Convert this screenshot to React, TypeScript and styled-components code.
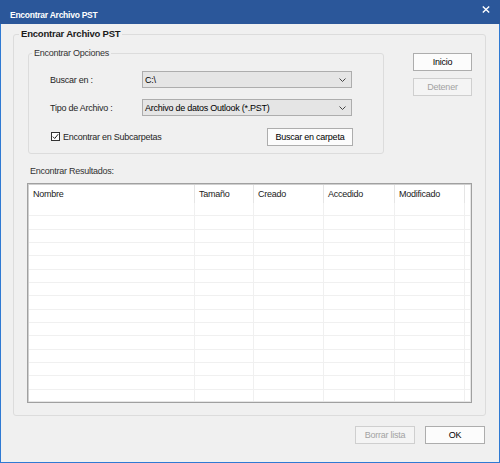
import React from "react";
import styled, { createGlobalStyle } from "styled-components";

const Global = createGlobalStyle`
  html, body { margin: 0; padding: 0; background: #f0f0f0; }
  body { font-family: "Liberation Sans", Arial, sans-serif; }
`;

const Window = styled.div`
  width: 500px;
  height: 463px;
  box-sizing: border-box;
  border: 1px solid #2f7ad3;
  border-top: none;
  background: #f0f0f0;
  display: flex;
  flex-direction: column;
  font-family: "Liberation Sans", Arial, sans-serif;
  font-size: 9px;
  letter-spacing: -0.25px;
  color: #1a1a1a;
`;

const TitleBar = styled.div`
  height: 24px;
  margin: 0 -1px;
  background: #2b579a;
  color: #fff;
  display: flex;
  justify-content: space-between;
  align-items: center;
  padding: 0 10px 0 10px;
  flex-shrink: 0;
`;

const TitleText = styled.span`
  font-weight: bold;
  font-size: 8.5px;
  line-height: 14px;
  margin-top: 6px;
`;

const CloseIcon = styled.svg`
  width: 8px;
  height: 7px;
  align-self: flex-start;
  margin-top: 6px;
`;

const Body = styled.div`
  flex: 1;
  display: flex;
  flex-direction: column;
  padding: 10px 13px 0 12px;
`;

const Group = styled.div<{ $w?: number; $h?: number }>`
  position: relative;
  box-sizing: border-box;
  border: 1px solid #dcdcdc;
  border-radius: 3px;
  ${(p) => (p.$w ? `width: ${p.$w}px;` : "")}
  ${(p) => (p.$h ? `height: ${p.$h}px;` : "")}
`;

const GroupTitle = styled.span<{ $bold?: boolean; $left: number }>`
  position: absolute;
  top: -8px;
  left: ${(p) => p.$left}px;
  padding: 0 2px;
  background: #f0f0f0;
  line-height: 14px;
  font-weight: ${(p) => (p.$bold ? "bold" : "normal")};
  font-size: ${(p) => (p.$bold ? "9.5px" : "9px")};
  letter-spacing: ${(p) => (p.$bold ? "-0.2px" : "-0.25px")};
  color: ${(p) => (p.$bold ? "#1a1a1a" : "#333")};
`;

const OuterContent = styled.div`
  display: flex;
  flex-direction: column;
  padding: 18px 12px 12px 13px;
`;

const TopRow = styled.div`
  display: flex;
  align-items: flex-start;
  gap: 29px;
  margin-left: 1px;
`;

const OptionsContent = styled.div`
  display: grid;
  grid-template-columns: 92px 210px;
  grid-template-rows: 17px 17px 18px;
  row-gap: 11px;
  padding: 17px 0 7px 21px;
  align-items: center;
`;

const FieldLabel = styled.span`
  line-height: 14px;
  color: #262626;
`;

const Combo = styled.div`
  height: 17px;
  box-sizing: border-box;
  background: #e5e5e5;
  border: 1px solid #adadad;
  display: flex;
  align-items: center;
  justify-content: space-between;
  padding: 0 5px 0 2px;
  color: #000;
`;

const Chevron = styled.svg`
  width: 7px;
  height: 4px;
`;

const CheckRow = styled.div`
  grid-column: 1 / span 2;
  display: flex;
  align-items: center;
  justify-content: space-between;
  margin-top: 1px;
  margin-right: -1px;
`;

const CheckLabel = styled.label`
  display: flex;
  align-items: center;
  gap: 3px;
  margin-left: 1px;
  color: #262626;
`;

const CheckBox = styled.span`
  width: 9px;
  height: 9px;
  box-sizing: border-box;
  border: 1px solid #333;
  background: #fff;
  display: flex;
  align-items: center;
  justify-content: center;
`;

const ButtonColumn = styled.div`
  display: flex;
  flex-direction: column;
  gap: 7px;
`;

const Btn = styled.button<{ $w: number }>`
  width: ${(p) => p.$w}px;
  height: 18px;
  box-sizing: border-box;
  padding: 0;
  margin: 0;
  border: 1px solid #adadad;
  background: #fcfcfc;
  font-family: inherit;
  font-size: 9px;
  letter-spacing: -0.25px;
  color: #000;
  &:disabled {
    border-color: #cfcfcf;
    background: #f4f4f4;
    color: #a3a3a3;
  }
`;

const ResultsLabel = styled.div`
  margin-top: 10px;
  padding-left: 3px;
  line-height: 14px;
  color: #333;
`;

const Table = styled.div`
  margin-top: 5px;
  width: 445px;
  height: 220px;
  box-sizing: border-box;
  border: 1px solid #a0a0a0;
  box-shadow: inset 1px 1px 0 #cfcfcf, inset -1px -1px 0 #e6e6e6;
  padding: 1px;
  background: #fff;
  overflow: hidden;
  display: flex;
  flex-direction: column;
`;

const COLS = "166px 59px 70px 71px 70px 1fr";

const HeaderRow = styled.div`
  display: grid;
  grid-template-columns: ${COLS};
  height: 18px;
  flex-shrink: 0;
`;

const HeaderCell = styled.div<{ $last?: boolean }>`
  border-right: ${(p) => (p.$last ? "none" : "1px solid #e5e5e5")};
  padding-left: 4px;
  line-height: 18px;
  color: #1a1a1a;
  white-space: nowrap;
`;

const GridBody = styled.div`
  display: grid;
  grid-template-columns: ${COLS};
  grid-auto-rows: 13.33px;
  overflow: hidden;
  flex: 1;
  min-height: 0;
`;

const GridCell = styled.div<{ $last?: boolean }>`
  box-sizing: border-box;
  border-bottom: 1px solid #f0f0f0;
  border-right: ${(p) => (p.$last ? "none" : "1px solid #f0f0f0")};
`;

const Footer = styled.div`
  display: flex;
  justify-content: flex-end;
  gap: 10px;
  margin-top: 10px;
  padding-right: 1px;
`;

const headers = ["Nombre", "Tamaño", "Creado", "Accedido", "Modificado", ""];

export default function App() {
  const rows = Array.from({ length: 15 });
  return (
    <>
      <Global />
      <Window>
        <TitleBar>
          <TitleText>Encontrar Archivo PST</TitleText>
          <CloseIcon viewBox="0 0 8 7">
            <path d="M0.8 0.5 L7.2 6.5 M7.2 0.5 L0.8 6.5" stroke="#fff" strokeWidth="1.4" fill="none" />
          </CloseIcon>
        </TitleBar>
        <Body>
          <Group $w={473} $h={382}>
            <GroupTitle $bold $left={5}>Encontrar Archivo PST</GroupTitle>
            <OuterContent>
              <TopRow>
                <Group $w={356} $h={101}>
                  <GroupTitle $left={3}>Encontrar Opciones</GroupTitle>
                  <OptionsContent>
                    <FieldLabel>Buscar en :</FieldLabel>
                    <Combo>
                      <span>C:\</span>
                      <Chevron viewBox="0 0 7 4">
                        <path d="M0.5 0.5 L3.5 3.5 L6.5 0.5" stroke="#444" strokeWidth="1" fill="none" />
                      </Chevron>
                    </Combo>
                    <FieldLabel>Tipo de Archivo :</FieldLabel>
                    <Combo>
                      <span>Archivo de datos Outlook (*.PST)</span>
                      <Chevron viewBox="0 0 7 4">
                        <path d="M0.5 0.5 L3.5 3.5 L6.5 0.5" stroke="#444" strokeWidth="1" fill="none" />
                      </Chevron>
                    </Combo>
                    <CheckRow>
                      <CheckLabel>
                        <CheckBox>
                          <svg width="7" height="7" viewBox="0 0 7 7">
                            <path d="M0.8 3.6 L2.7 5.5 L6.2 1.2" stroke="#222" strokeWidth="1" fill="none" />
                          </svg>
                        </CheckBox>
                        Encontrar en Subcarpetas
                      </CheckLabel>
                      <Btn $w={86}>Buscar en carpeta</Btn>
                    </CheckRow>
                  </OptionsContent>
                </Group>
                <ButtonColumn>
                  <Btn $w={59}>Inicio</Btn>
                  <Btn $w={59} disabled>Detener</Btn>
                </ButtonColumn>
              </TopRow>
              <ResultsLabel>Encontrar Resultados:</ResultsLabel>
              <Table>
                <HeaderRow>
                  {headers.map((h, i) => (
                    <HeaderCell key={i} $last={i === headers.length - 1}>{h}</HeaderCell>
                  ))}
                </HeaderRow>
                <GridBody>
                  {rows.map((_, r) =>
                    headers.map((_, c) => (
                      <GridCell key={`${r}-${c}`} $last={c === headers.length - 1} />
                    ))
                  )}
                </GridBody>
              </Table>
            </OuterContent>
          </Group>
          <Footer>
            <Btn $w={60} disabled>Borrar lista</Btn>
            <Btn $w={60}>OK</Btn>
          </Footer>
        </Body>
      </Window>
    </>
  );
}
